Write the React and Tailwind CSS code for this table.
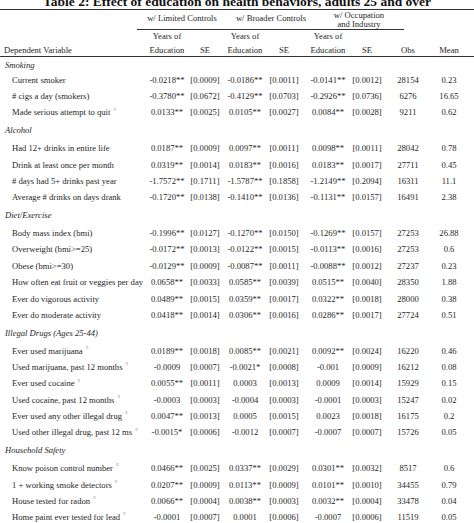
import React from "react";

const sections = [
  {
    title: "Smoking",
    first: true,
    rows: [
      ["Current smoker", "-0.0218**", "[0.0009]", "-0.0186**", "[0.0011]", "-0.0141**", "[0.0012]", "28154", "0.23"],
      ["# cigs a day (smokers)", "-0.3780**", "[0.0672]", "-0.4129**", "[0.0703]", "-0.2926**", "[0.0736]", "6276", "16.65"],
      ["Made serious attempt to quit °", "0.0133**", "[0.0025]", "0.0105**", "[0.0027]", "0.0084**", "[0.0028]", "9211", "0.62"],
    ],
  },
  {
    title: "Alcohol",
    rows: [
      ["Had 12+ drinks in entire life", "0.0187**", "[0.0009]", "0.0097**", "[0.0011]", "0.0098**", "[0.0011]", "28042", "0.78"],
      ["Drink at least once per month", "0.0319**", "[0.0014]", "0.0183**", "[0.0016]", "0.0183**", "[0.0017]", "27711", "0.45"],
      ["# days had 5+ drinks past year", "-1.7572**", "[0.1711]", "-1.5787**", "[0.1858]", "-1.2149**", "[0.2094]", "16311", "11.1"],
      ["Average # drinks on days drank", "-0.1720**", "[0.0138]", "-0.1410**", "[0.0136]", "-0.1131**", "[0.0157]", "16491", "2.38"],
    ],
  },
  {
    title: "Diet/Exercise",
    rows: [
      ["Body mass index (bmi)", "-0.1996**", "[0.0127]", "-0.1270**", "[0.0150]", "-0.1269**", "[0.0157]", "27253", "26.88"],
      ["Overweight (bmi>=25)", "-0.0172**", "[0.0013]", "-0.0122**", "[0.0015]", "-0.0113**", "[0.0016]", "27253", "0.6"],
      ["Obese (bmi>=30)", "-0.0129**", "[0.0009]", "-0.0087**", "[0.0011]", "-0.0088**", "[0.0012]", "27237", "0.23"],
      ["How often eat fruit or veggies per day", "0.0658**", "[0.0033]", "0.0585**", "[0.0039]", "0.0515**", "[0.0040]", "28350", "1.88"],
      ["Ever do vigorous activity", "0.0489**", "[0.0015]", "0.0359**", "[0.0017]", "0.0322**", "[0.0018]", "28000", "0.38"],
      ["Ever do moderate activity", "0.0418**", "[0.0014]", "0.0306**", "[0.0016]", "0.0286**", "[0.0017]", "27724", "0.51"],
    ],
  },
  {
    title: "Illegal Drugs (Ages 25-44)",
    rows: [
      ["Ever used marijuana °", "0.0189**", "[0.0018]", "0.0085**", "[0.0021]", "0.0092**", "[0.0024]", "16220", "0.46"],
      ["Used marijuana, past 12 months °", "-0.0009", "[0.0007]", "-0.0021*", "[0.0008]", "-0.001", "[0.0009]", "16212", "0.08"],
      ["Ever used cocaine °", "0.0055**", "[0.0011]", "0.0003", "[0.0013]", "0.0009", "[0.0014]", "15929", "0.15"],
      ["Used cocaine, past 12 months °", "-0.0003", "[0.0003]", "-0.0004", "[0.0003]", "-0.0001", "[0.0003]", "15247", "0.02"],
      ["Ever used any other illegal drug °", "0.0047**", "[0.0013]", "0.0005", "[0.0015]", "0.0023", "[0.0018]", "16175", "0.2"],
      ["Used other illegal drug, past 12 ms °", "-0.0015*", "[0.0006]", "-0.0012", "[0.0007]", "-0.0007", "[0.0007]", "15726", "0.05"],
    ],
  },
  {
    title: "Household Safety",
    rows: [
      ["Know poison control number °", "0.0466**", "[0.0025]", "0.0337**", "[0.0029]", "0.0301**", "[0.0032]", "8517", "0.6"],
      ["1 + working smoke detectors °", "0.0207**", "[0.0009]", "0.0113**", "[0.0009]", "0.0101**", "[0.0010]", "34455", "0.79"],
      ["House tested for radon °", "0.0066**", "[0.0004]", "0.0038**", "[0.0003]", "0.0032**", "[0.0004]", "33478", "0.04"],
      ["Home paint ever tested for lead °", "-0.0001", "[0.0007]", "0.0001", "[0.0006]", "-0.0007", "[0.0006]", "11519", "0.05"],
    ],
  },
];

const grid = "grid grid-cols-[145px_44px_32px_48px_30px_58px_20px_62px_20px_1fr]";

function Label({ text }) {
  const hasDeg = text.endsWith("°");
  const main = hasDeg ? text.slice(0, -2) : text;
  return (
    <div className="pl-[12px] whitespace-nowrap flex items-center">
      <span>{main}</span>
      {hasDeg && <span className="ml-[3px] text-[7px] text-[#888] relative -top-[2px]">°</span>}
    </div>
  );
}

function Cell({ children }) {
  return <div className="flex justify-center items-center whitespace-nowrap">{children}</div>;
}

export default function App() {
  return (
    <div className="w-[474px] h-[523px] overflow-hidden bg-white text-[#262626] font-['Liberation_Serif',serif] text-[8.6px]">
      <div className="h-[9px] overflow-hidden flex items-end justify-center">
        <div className="font-bold text-[13.5px] leading-[15px] whitespace-nowrap text-[#111]">
          Table 2: Effect of education on health behaviors, adults 25 and over
        </div>
      </div>
      <div className="border-t border-[#333]">
        <div className="flex h-[19px] leading-[9px]">
          <div className="w-[137px]" />
          <div className="w-[90px] flex justify-center pt-[3.5px] whitespace-nowrap">w/ Limited Controls</div>
          <div className="w-[88px] flex justify-center pt-[3.5px] whitespace-nowrap">w/ Broader Controls</div>
          <div className="w-[88px] flex flex-col items-center pt-[0.5px] whitespace-nowrap">
            <span>w/ Occupation</span>
            <span>and Industry</span>
          </div>
        </div>
        <div className="ml-[137px] w-[267px] border-t border-[#333]" />
        <div className={`${grid} h-[27px] leading-[13.5px] border-b border-[#333]`}>
          <div className="flex items-end pl-[4px] whitespace-nowrap">Dependent Variable</div>
          <div className="flex flex-col items-center justify-end whitespace-nowrap"><span>Years of</span><span>Education</span></div>
          <div className="flex items-end justify-center">SE</div>
          <div className="flex flex-col items-center justify-end whitespace-nowrap"><span>Years of</span><span>Education</span></div>
          <div className="flex items-end justify-center">SE</div>
          <div className="flex flex-col items-center justify-end whitespace-nowrap"><span>Years of</span><span>Education</span></div>
          <div className="flex items-end justify-center">SE</div>
          <div className="flex items-end justify-center">Obs</div>
          <div className="flex items-end justify-center">Mean</div>
          <div />
        </div>
      </div>
      <div className="flex flex-col">
        {sections.map((s) => (
          <div key={s.title} className="flex flex-col">
            <div className={`${s.first ? "h-[15px] pt-[2px]" : "h-[19.5px]"} flex items-center pl-[5px] italic whitespace-nowrap`}>
              {s.title}
            </div>
            {s.rows.map((r) => (
              <div key={r[0]} className={`${grid} h-[16.35px]`}>
                <Label text={r[0]} />
                {r.slice(1).map((v, i) => (
                  <Cell key={i}>{v}</Cell>
                ))}
                <div />
              </div>
            ))}
          </div>
        ))}
      </div>
    </div>
  );
}
